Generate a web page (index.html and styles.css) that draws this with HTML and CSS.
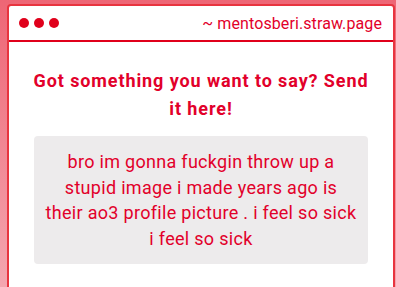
FILE: index.html
```html
<!DOCTYPE html>
<html>
<head>
<meta charset="utf-8">
<link rel="stylesheet" href="styles.css">
</head>
<body>
<div class="window">
  <div class="titlebar">
    <div class="dots"><span class="dot"></span><span class="dot"></span><span class="dot"></span></div>
    <div class="url">~ mentosberi.straw.page</div>
  </div>
  <div class="content">
    <h1 class="heading">Got something you want to say? Send it here!</h1>
    <div class="message">bro im gonna fuckgin throw up a stupid image i made years ago is their ao3 profile picture . i feel so sick i feel so sick</div>
  </div>
</div>
</body>
</html>
```
FILE: styles.css
```css
html, body {
  margin: 0;
  height: 100%;
}
body {
  background: linear-gradient(180deg, #ee6675 0%, #f4a6b0 100%);
  padding: 4px 1px 0 7px;
  box-sizing: border-box;
  overflow: hidden;
  font-family: Roboto, "Liberation Sans", sans-serif;
}
.window {
  background: #fff;
  border: 2px solid #e8343f;
  border-radius: 4px;
  min-height: 400px;
}
.titlebar {
  height: 34px;
  border-bottom: 2px solid #e0001b;
  display: flex;
  align-items: center;
  justify-content: space-between;
  padding: 0 11px 0 10px;
}
.dots {
  display: flex;
  gap: 5px;
}
.dot {
  width: 10px;
  height: 10px;
  border-radius: 50%;
  background: #e0001b;
}
.url {
  color: #e2002a;
  font-size: 16px;
  letter-spacing: 0.1px;
  line-height: 20px;
  padding-top: 1px;
}
.content {
  padding: 25px 25px 0;
}
.heading {
  margin: 0 -5px 13px;
  color: #e2002a;
  font-size: 18px;
  font-weight: 700;
  letter-spacing: 0.9px;
  line-height: 28px;
  text-align: center;
}
.message {
  background: #edebec;
  border-radius: 4px;
  padding: 13px 10px;
  color: #e2002a;
  font-size: 18px;
  letter-spacing: 0.3px;
  line-height: 25.5px;
  text-align: center;
}
```
